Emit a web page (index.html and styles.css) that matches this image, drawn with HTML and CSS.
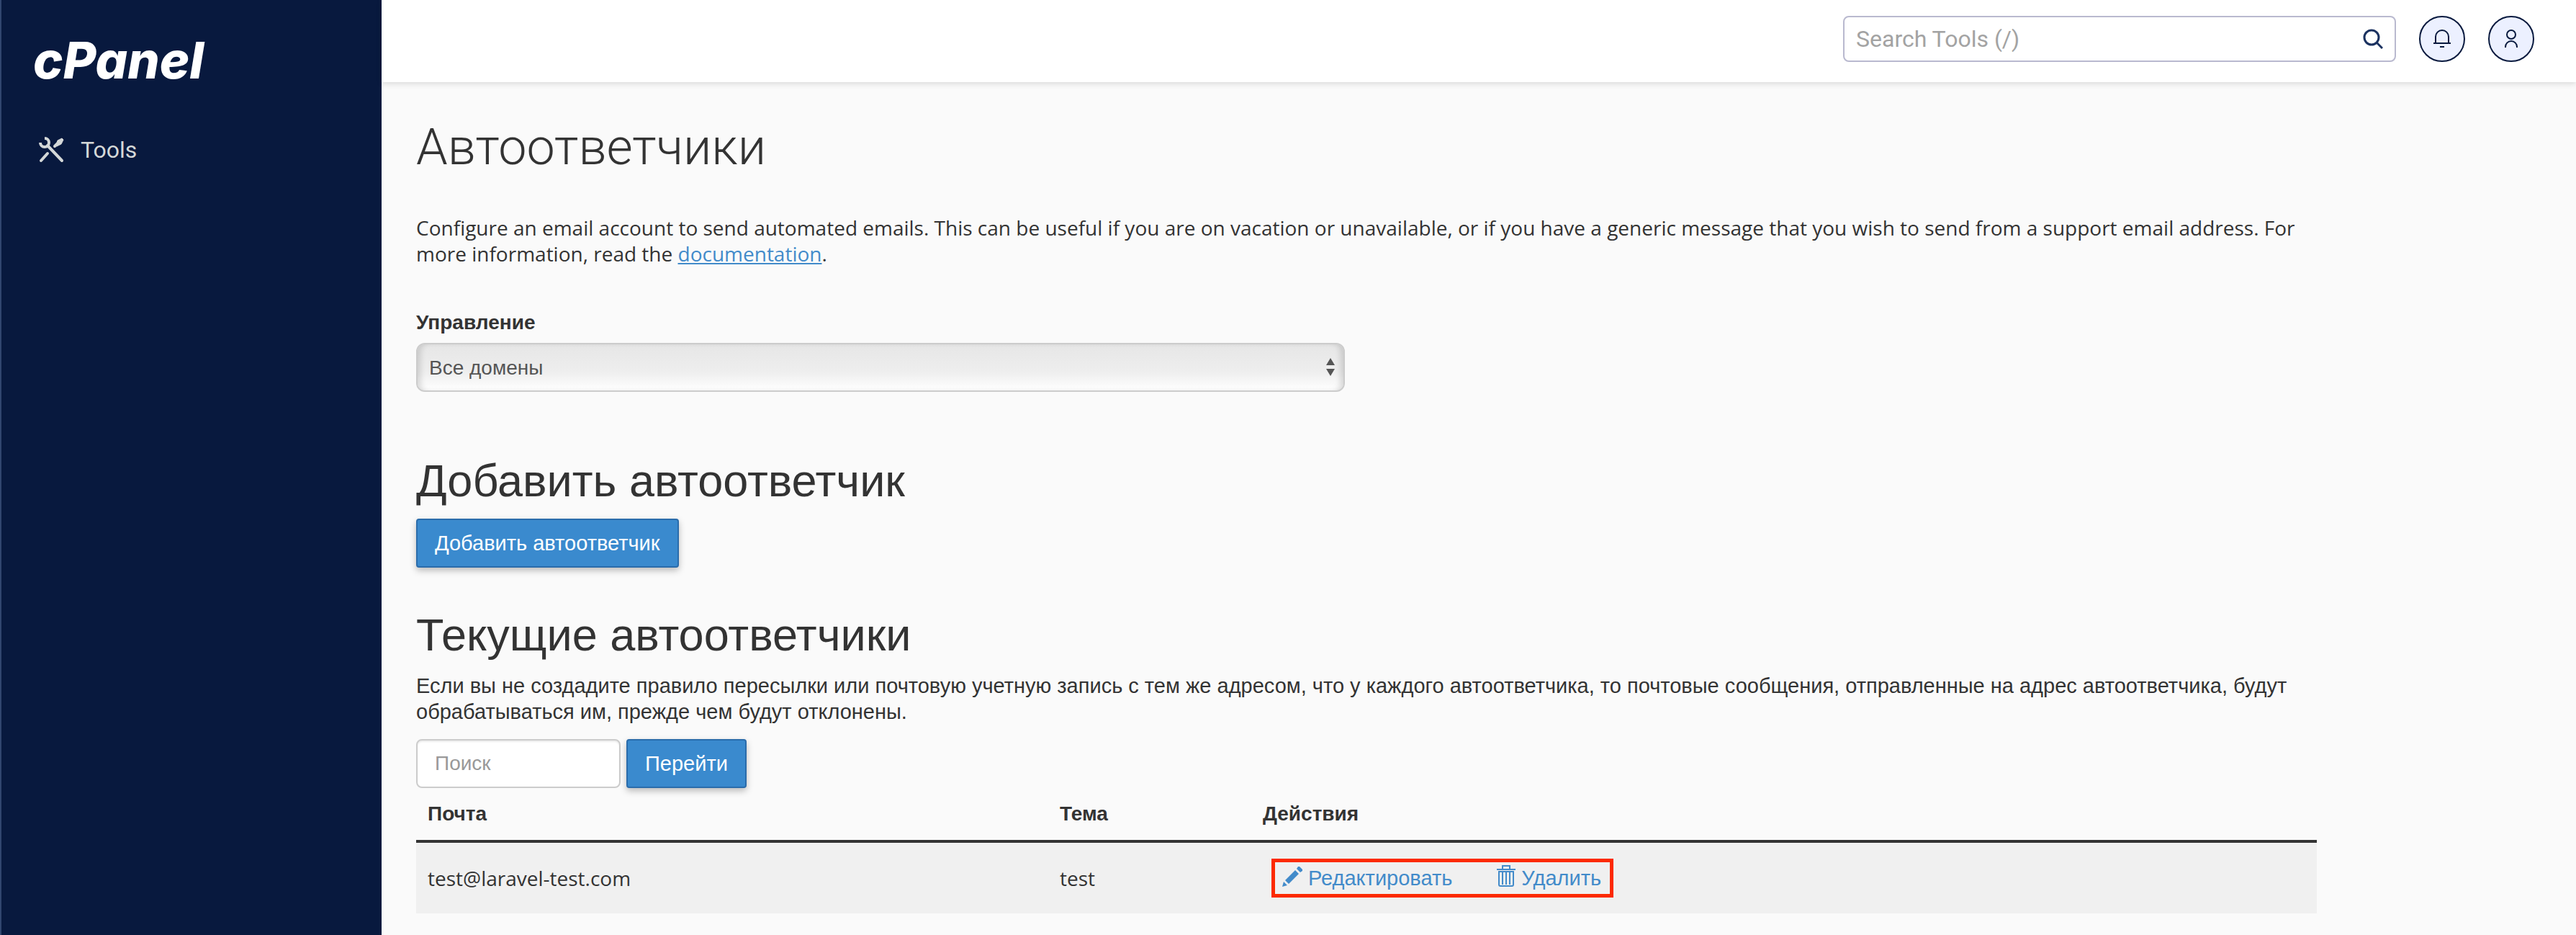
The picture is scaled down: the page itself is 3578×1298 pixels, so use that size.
FILE: index.html
```html
<!DOCTYPE html>
<html lang="ru">

<head>
    <meta charset="utf-8">
    <meta name="viewport" content="width=device-width, initial-scale=1.0">
    <title>cPanel - Автоответчики</title>
    <link rel="stylesheet" href="styles.css">
</head>

<body>
    <aside class="sidebar">
        <a class="logo" href="#">cPanel</a>
        <nav>
            <a class="nav_link" href="#">
                <svg class="nav_icon" viewBox="0 0 36 36" fill="none" stroke="currentColor" stroke-width="4" stroke-linecap="round">
                    <path d="M12 12L32 33M3 33L12 23M22 13l4-4" />
                    <path d="M24 11l2-6 6-3 2 2-3 6-6 3z" fill="currentColor" stroke-width="1" />
                    <path d="M8 2a6 6 0 1 1-6 6" stroke-linecap="butt" />
                </svg>
                Tools
            </a>
        </nav>
    </aside>

    <div class="page">
        <header class="topbar">
            <form class="tool_search">
                <input type="text" aria-label="Search Tools" placeholder="Search Tools (/)">
                <button class="search_button" type="button" aria-label="Search">
                    <svg viewBox="0 0 28 28" fill="none" stroke="currentColor" stroke-width="3">
                        <circle cx="12" cy="12" r="10" />
                        <path d="M19 19l8 8" />
                    </svg>
                </button>
            </form>
            <button class="round_button" type="button" aria-label="Notifications">
                <svg viewBox="0 0 26 26" fill="none" stroke="currentColor" stroke-width="2">
                    <path d="M4 19V10a9 9 0 0 1 18 0v9M1 19h24M10 24h6" />
                </svg>
            </button>
            <button class="round_button" type="button" aria-label="Account">
                <svg viewBox="0 0 26 26" fill="none" stroke="currentColor" stroke-width="2">
                    <circle cx="13" cy="7" r="6" />
                    <path d="M5 25v-1a8 8 0 0 1 16 0v1" />
                </svg>
            </button>
        </header>

        <main>
            <h1>Автоответчики</h1>
            <p class="intro">Configure an email account to send automated emails. This can be useful if you are on vacation or unavailable, or if you have a generic message that you wish to send from a support email address. For more information, read the <a href="#">documentation</a>.</p>

            <section class="manage">
                <label for="domain">Управление</label>
                <div class="select_wrap">
                    <select id="domain">
                        <option>Все домены</option>
                    </select>
                    <svg class="select_arrows" viewBox="0 0 12 26" fill="currentColor">
                        <path d="M0 10L6 0l6 10zM0 15h12L6 25z" />
                    </svg>
                </div>
            </section>

            <section class="add">
                <h2>Добавить автоответчик</h2>
                <button class="btn" type="button">Добавить автоответчик</button>
            </section>

            <section class="current">
                <h2>Текущие автоответчики</h2>
                <p>Если вы не создадите правило пересылки или почтовую учетную запись с тем же адресом, что у каждого автоответчика, то почтовые сообщения, отправленные на адрес автоответчика, будут обрабатываться им, прежде чем будут отклонены.</p>

                <form class="filter">
                    <input type="text" aria-label="Поиск" placeholder="Поиск">
                    <button class="btn" type="button">Перейти</button>
                </form>

                <table>
                    <thead>
                        <tr>
                            <th class="col_mail">Почта</th>
                            <th class="col_subject">Тема</th>
                            <th>Действия</th>
                        </tr>
                    </thead>
                    <tbody>
                        <tr>
                            <td>test@laravel-test.com</td>
                            <td>test</td>
                            <td>
                                <div class="actions">
                                    <a href="#">
                                        <svg class="icon_edit" viewBox="0 0 28 30" fill="currentColor">
                                            <path d="M0 30l2-7 5 5zM4 21L18 7l5 5L9 26zM20 5l2-3h2l4 4v2l-3 2z" />
                                        </svg>
                                        Редактировать
                                    </a>
                                    <a href="#">
                                        <svg class="icon_delete" viewBox="0 0 26 30" fill="none" stroke="currentColor" stroke-width="2">
                                            <path d="M0 6h26M8 5V1h10v4M3 9h20v18a2 2 0 0 1-2 2H5a2 2 0 0 1-2-2zM8 9v18M13 9v18M18 9v18" />
                                        </svg>
                                        Удалить
                                    </a>
                                </div>
                            </td>
                        </tr>
                    </tbody>
                </table>
            </section>
        </main>
    </div>
</body>

</html>
```

FILE: styles.css
```css
* {
    box-sizing: border-box;
}

body {
    margin: 0;
    min-height: 100vh;
    display: flex;
    background-color: #fafafa;
    color: #333;
    font-family: "Open Sans", "Liberation Sans", sans-serif;
    font-size: 28px;
    line-height: 36px;
}

input,
select,
button {
    font-family: "Liberation Sans", sans-serif;
    font-size: 28px;
}

a {
    color: #428bca;
}

/* sidebar */

.sidebar {
    flex: none;
    width: 530px;
    padding: 46px 44px;
    background-color: #08193e;
    border-left: 2px solid #31466e;
}

.logo {
    display: block;
    color: white;
    font: italic 800 70px/76px Inter, sans-serif;
    text-decoration: none;
}

.nav_link {
    display: flex;
    align-items: center;
    gap: 22px;
    margin-top: 68px;
    padding-left: 8px;
    color: #d4d8d8;
    font: 32px/36px Roboto, sans-serif;
    text-decoration: none;
}

.nav_icon {
    width: 36px;
    height: 36px;
}

/* top bar */

.page {
    flex: 1;
    min-width: 0;
}

.topbar {
    display: flex;
    justify-content: flex-end;
    gap: 32px;
    height: 114px;
    padding: 22px 58px;
    background-color: white;
    box-shadow: 0 2px 8px rgba(0, 0, 0, 0.14);
}

.tool_search {
    display: flex;
    width: 768px;
    height: 64px;
    border: 2px solid #b9b9cf;
    border-radius: 8px;
}

.tool_search input {
    flex: 1;
    padding: 0 16px;
    border: none;
    background: none;
    font-family: Roboto, sans-serif;
    font-size: 32px;
}

.tool_search input::placeholder {
    color: #a3a3a3;
}

.search_button {
    display: flex;
    align-items: center;
    padding: 0 16px;
    border: none;
    background: none;
    color: #1b3260;
}

.search_button svg {
    width: 28px;
    height: 28px;
}

.round_button {
    display: flex;
    align-items: center;
    justify-content: center;
    width: 64px;
    height: 64px;
    padding: 0;
    border: 2px solid #08193e;
    border-radius: 50%;
    background-color: #ecf0ff;
    color: #08193e;
}

.round_button svg {
    width: 26px;
    height: 26px;
}

/* content */

main {
    max-width: 2736px;
    padding: 48px;
}

h1,
h2,
p {
    margin: 0;
}

h1 {
    font: 300 70px/84px Roboto, sans-serif;
}

h2 {
    font: 63px/66px "Liberation Sans", sans-serif;
}

.intro {
    margin-top: 52px;
}

.manage {
    margin-top: 60px;
}

.manage label {
    display: block;
    margin-bottom: 10px;
    font: bold 28px/36px "Liberation Sans", sans-serif;
}

.select_wrap {
    position: relative;
    width: 1290px;
    max-width: 100%;
}

select {
    display: block;
    appearance: none;
    width: 100%;
    height: 68px;
    padding: 0 16px;
    border: 2px solid #ccc;
    border-radius: 12px;
    background: linear-gradient(#e6e6e6, #eee 60%, white);
    box-shadow: inset 8px 0 8px -4px rgba(0, 0, 0, 0.14), inset -8px 0 8px -4px rgba(0, 0, 0, 0.14);
    color: #555;
}

.select_arrows {
    position: absolute;
    top: 21px;
    right: 14px;
    width: 12px;
    height: 26px;
    color: #555;
    pointer-events: none;
}

.add {
    margin-top: 90px;
}

.btn {
    height: 68px;
    padding: 0 24px;
    border: 2px solid #2a6cab;
    border-radius: 4px;
    background-color: #3a8ace;
    box-shadow: 0 4px 10px rgba(0, 0, 0, 0.26);
    color: white;
    font-size: 29px;
}

.add .btn {
    display: block;
    margin-top: 20px;
}

.current {
    margin-top: 60px;
}

.current p {
    margin-top: 20px;
    font-family: "Liberation Sans", sans-serif;
    font-size: 29px;
}

.filter {
    display: flex;
    gap: 8px;
    margin-top: 20px;
}

.filter input {
    width: 284px;
    height: 68px;
    padding: 0 24px;
    border: 2px solid #ccc;
    border-radius: 8px;
    background-color: white;
    box-shadow: inset 0 2px 2px rgba(0, 0, 0, 0.08);
}

.filter input::placeholder {
    color: #999;
}

table {
    width: 100%;
    border-collapse: collapse;
    table-layout: fixed;
}

.col_mail {
    width: 878px;
}

.col_subject {
    width: 282px;
}

th {
    height: 74px;
    padding: 0 16px;
    border-bottom: 4px solid #333;
    font-family: "Liberation Sans", sans-serif;
    text-align: left;
}

td {
    height: 100px;
    padding: 0 16px;
    background-color: #f0f0f0;
}

.actions {
    display: inline-flex;
    gap: 62px;
    margin-left: 12px;
    padding: 4px 12px 4px 10px;
    border: 5px solid #fc2a00;
    vertical-align: middle;
}

.actions a {
    display: flex;
    align-items: flex-start;
    gap: 8px;
    font-family: "Liberation Sans", sans-serif;
    font-size: 29px;
    text-decoration: none;
}

.icon_edit {
    width: 28px;
    height: 30px;
}

.icon_delete {
    width: 26px;
    height: 30px;
}
```
